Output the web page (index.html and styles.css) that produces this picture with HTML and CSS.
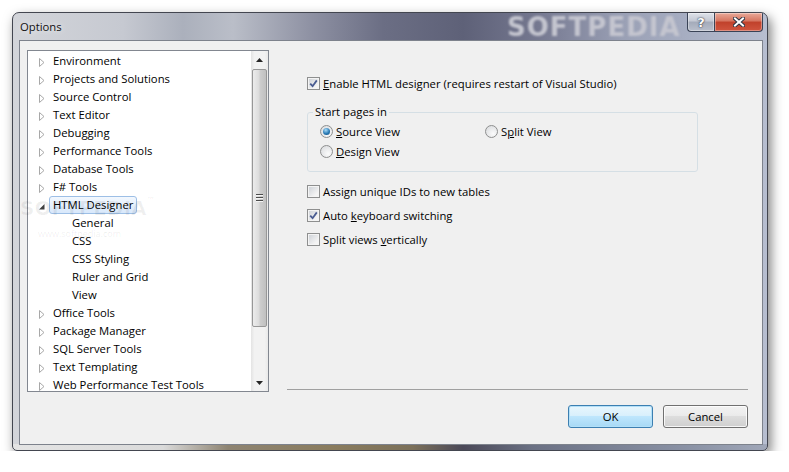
FILE: index.html
```html
<!DOCTYPE html>
<html lang="en">
<head>
    <meta charset="UTF-8">
    <title>Options</title>
    <link rel="stylesheet" href="styles.css">
</head>
<body>
    <div class="window">
        <div class="titlebar">
            <span class="title">Options</span>
            <span class="watermark">SOFTPEDIA</span>
            <div class="caption-buttons">
                <div class="cap help">?</div>
                <div class="cap close">
                    <svg width="12" height="10" viewBox="0 0 12 10">
                        <path d="M2 1.5 L10 8.5 M10 1.5 L2 8.5" stroke="#2f3645" stroke-width="4" stroke-linecap="square"/>
                        <path d="M2 1.5 L10 8.5 M10 1.5 L2 8.5" stroke="#fff" stroke-width="2" stroke-linecap="square"/>
                    </svg>
                </div>
            </div>
        </div>

        <div class="client">
            <span class="tree-mark">SOFTPEDIA<small>™</small></span>
            <span class="tree-url">www.softpedia.com</span>

            <div class="tree">
                <ul class="tree-items">
                    <li class="node"><svg class="twisty" width="6" height="9"><polygon points="0.5,0.5 5,4.5 0.5,8.5" fill="#fff" stroke="#a8a8a8"/></svg><span class="label">Environment</span></li>
                    <li class="node"><svg class="twisty" width="6" height="9"><polygon points="0.5,0.5 5,4.5 0.5,8.5" fill="#fff" stroke="#a8a8a8"/></svg><span class="label">Projects and Solutions</span></li>
                    <li class="node"><svg class="twisty" width="6" height="9"><polygon points="0.5,0.5 5,4.5 0.5,8.5" fill="#fff" stroke="#a8a8a8"/></svg><span class="label">Source Control</span></li>
                    <li class="node"><svg class="twisty" width="6" height="9"><polygon points="0.5,0.5 5,4.5 0.5,8.5" fill="#fff" stroke="#a8a8a8"/></svg><span class="label">Text Editor</span></li>
                    <li class="node"><svg class="twisty" width="6" height="9"><polygon points="0.5,0.5 5,4.5 0.5,8.5" fill="#fff" stroke="#a8a8a8"/></svg><span class="label">Debugging</span></li>
                    <li class="node"><svg class="twisty" width="6" height="9"><polygon points="0.5,0.5 5,4.5 0.5,8.5" fill="#fff" stroke="#a8a8a8"/></svg><span class="label">Performance Tools</span></li>
                    <li class="node"><svg class="twisty" width="6" height="9"><polygon points="0.5,0.5 5,4.5 0.5,8.5" fill="#fff" stroke="#a8a8a8"/></svg><span class="label">Database Tools</span></li>
                    <li class="node"><svg class="twisty" width="6" height="9"><polygon points="0.5,0.5 5,4.5 0.5,8.5" fill="#fff" stroke="#a8a8a8"/></svg><span class="label">F# Tools</span></li>
                    <li class="node open"><svg class="twisty" width="6" height="9"><polygon points="5.5,2 5.5,7.5 0,7.5" fill="#404040"/></svg><span class="label selected">HTML Designer</span></li>
                    <li class="node child"><span class="label">General</span></li>
                    <li class="node child"><span class="label">CSS</span></li>
                    <li class="node child"><span class="label">CSS Styling</span></li>
                    <li class="node child"><span class="label">Ruler and Grid</span></li>
                    <li class="node child"><span class="label">View</span></li>
                    <li class="node"><svg class="twisty" width="6" height="9"><polygon points="0.5,0.5 5,4.5 0.5,8.5" fill="#fff" stroke="#a8a8a8"/></svg><span class="label">Office Tools</span></li>
                    <li class="node"><svg class="twisty" width="6" height="9"><polygon points="0.5,0.5 5,4.5 0.5,8.5" fill="#fff" stroke="#a8a8a8"/></svg><span class="label">Package Manager</span></li>
                    <li class="node"><svg class="twisty" width="6" height="9"><polygon points="0.5,0.5 5,4.5 0.5,8.5" fill="#fff" stroke="#a8a8a8"/></svg><span class="label">SQL Server Tools</span></li>
                    <li class="node"><svg class="twisty" width="6" height="9"><polygon points="0.5,0.5 5,4.5 0.5,8.5" fill="#fff" stroke="#a8a8a8"/></svg><span class="label">Text Templating</span></li>
                    <li class="node"><svg class="twisty" width="6" height="9"><polygon points="0.5,0.5 5,4.5 0.5,8.5" fill="#fff" stroke="#a8a8a8"/></svg><span class="label">Web Performance Test Tools</span></li>
                </ul>
                <div class="vscroll">
                    <div class="sb-btn">
                        <svg width="7" height="4"><polygon points="3.5,0 7,4 0,4" fill="#262626"/></svg>
                    </div>
                    <div class="sb-track">
                        <div class="sb-thumb">
                            <div class="grip"><i></i><i></i><i></i></div>
                        </div>
                    </div>
                    <div class="sb-btn">
                        <svg width="7" height="4"><polygon points="0,0 7,0 3.5,4" fill="#262626"/></svg>
                    </div>
                </div>
            </div>

            <div class="pane">
                <div class="options">
                    <label class="check">
                        <span class="box"><svg width="9" height="9"><path d="M1.2 4.6 L3.6 7.2 L7.8 1.4" fill="none" stroke="#4b5d92" stroke-width="1.8"/></svg></span>
                        <span><u>E</u>nable HTML designer (requires restart of Visual Studio)</span>
                    </label>

                    <fieldset class="group">
                        <legend>Start pages in</legend>
                        <div class="radios">
                            <label class="radio"><span class="dot on"></span><span><u>S</u>ource View</span></label>
                            <label class="radio"><span class="dot"></span><span>S<u>p</u>lit View</span></label>
                            <label class="radio"><span class="dot"></span><span><u>D</u>esign View</span></label>
                        </div>
                    </fieldset>

                    <div class="checks">
                        <label class="check">
                            <span class="box"></span>
                            <span>Assi<u>g</u>n unique IDs to new tables</span>
                        </label>
                        <label class="check">
                            <span class="box"><svg width="9" height="9"><path d="M1.2 4.6 L3.6 7.2 L7.8 1.4" fill="none" stroke="#4b5d92" stroke-width="1.8"/></svg></span>
                            <span>Auto <u>k</u>eyboard switching</span>
                        </label>
                        <label class="check">
                            <span class="box"></span>
                            <span>Split views <u>v</u>ertically</span>
                        </label>
                    </div>
                </div>
                <div class="separator"></div>
                <div class="buttons">
                    <button class="btn default">OK</button>
                    <button class="btn">Cancel</button>
                </div>
            </div>
        </div>
    </div>
</body>
</html>
```

FILE: styles.css
```css
body {
    margin: 0;
    background-color: #fff;
    font-family: "Open Sans", "Noto Sans", sans-serif;
    font-size: 11.3px;
    color: #000;
}
.window {
    margin: 12px 0 0 12px;
    width: 754px;
    height: 437px;
    border: 1px solid #434650;
    border-radius: 7px 7px 5px 5px;
    display: flex;
    flex-direction: column;
    box-shadow: 3px 5px 12px rgba(0, 0, 0, 0.5);
    background:
        linear-gradient(to right, #e4e4e4 0px, #dadada 150px, #8e8472 215px, #8a7c5e 320px, #7b705a 400px, #4b4958 450px, #6b7184 520px, #8b93a6 680px, #a0a7b8 754px) bottom / 100% 6px no-repeat,
        linear-gradient(to right, #d3d5da 0px, #c6c9d1 110px, #abb0bc 170px, #babec8 220px, #8d90a2 300px, #6b6e84 370px, #5e6178 450px, #73768e 520px, #9aa0b5 610px, #a8afc3 680px, #b7bed0 754px);
    overflow: hidden;
}
.titlebar {
    position: relative;
    height: 27px;
    display: flex;
    align-items: flex-start;
}
.title {
    align-self: center;
    padding-left: 7px;
    color: #111;
    text-shadow: 0 0 6px rgba(255, 255, 255, 0.9);
}
.watermark {
    position: absolute;
    left: 494px;
    top: -1px;
    font-family: "DejaVu Sans", sans-serif;
    font-weight: bold;
    font-size: 26px;
    letter-spacing: 1px;
    color: #c4c5cf;
    filter: blur(1px);
}
.caption-buttons {
    margin-left: auto;
    margin-right: 4px;
    display: flex;
    position: relative;
}
.cap {
    height: 19px;
    box-sizing: border-box;
    border: 1px solid #3a4356;
    border-top: none;
    display: flex;
    align-items: center;
    justify-content: center;
    box-shadow: inset 0 0 0 1px rgba(255, 255, 255, 0.35);
}
.help {
    width: 27px;
    border-radius: 0 0 0 4px;
    border-right: none;
    background: linear-gradient(#dfe2e9, #c3c8d3 45%, #a4abba 50%, #b9bfcc);
    color: #fff;
    font-family: "DejaVu Sans", sans-serif;
    font-weight: bold;
    font-size: 13px;
    text-shadow: 0 0 2px #2a3040, 0 0 1px #2a3040;
}
.close {
    width: 49px;
    border-radius: 0 0 4px 0;
    background: linear-gradient(#e9a999, #d5745f 45%, #c0412b 50%, #d0553f);
}
.client {
    position: relative;
    flex: 1;
    margin: 0 4px 5px 6px;
    border: 1px solid #7d828c;
    background-color: #f0f0f0;
    display: flex;
    padding: 9px 14px 16px 7px;
}
.tree-mark {
    position: absolute;
    left: 0;
    top: 155px;
    font-family: "DejaVu Sans", sans-serif;
    font-weight: bold;
    font-size: 20px;
    color: rgba(0, 0, 0, 0.06);
    pointer-events: none;
}
.tree-mark small {
    font-size: 8px;
    vertical-align: top;
}
.tree-url {
    position: absolute;
    left: 18px;
    top: 186px;
    font-size: 9px;
    color: rgba(0, 0, 0, 0.08);
    pointer-events: none;
}
.tree {
    width: 242px;
    height: 342px;
    box-sizing: border-box;
    border: 1px solid #828790;
    background-color: #fff;
    display: flex;
    flex-shrink: 0;
}
.tree-items {
    flex: 1;
    margin: 0;
    padding: 1px 0 0 0;
    list-style: none;
    overflow: hidden;
}
.node {
    height: 18px;
    display: flex;
    align-items: center;
    padding-left: 11px;
    white-space: nowrap;
}
.twisty {
    width: 6px;
    margin-right: 4px;
    margin-top: 2px;
    flex-shrink: 0;
}
.node.child {
    padding-left: 40px;
}
.label {
    padding: 0 3px;
    border: 1px solid transparent;
    line-height: 16px;
}
.label.selected {
    border-color: #9dbfe6;
    border-radius: 3px;
    background: linear-gradient(#f3f8fe, #d8e8fb);
}
.vscroll {
    width: 17px;
    display: flex;
    flex-direction: column;
    background: linear-gradient(to right, #e3e3e3, #f2f2f2 20%, #f2f2f2 80%, #e9e9e9);
}
.sb-btn {
    height: 17px;
    display: flex;
    align-items: center;
    justify-content: center;
}
.sb-track {
    flex: 1;
    padding-top: 1px;
}
.sb-thumb {
    height: 258px;
    box-sizing: border-box;
    margin: 0 1px;
    border: 1px solid #979797;
    border-radius: 2px;
    background: linear-gradient(to right, #ececec, #dcdcdc 45%, #cdcdcd 55%, #c0c0c0);
    display: flex;
    align-items: center;
    justify-content: center;
}
.grip {
    display: flex;
    flex-direction: column;
    gap: 1px;
}
.grip i {
    display: block;
    width: 7px;
    height: 1px;
    background-color: #4c4c4c;
    border-bottom: 1px solid #f4f4f4;
}
.pane {
    flex: 1;
    margin-left: 18px;
    display: flex;
    flex-direction: column;
}
.options {
    flex: 1;
    padding: 24px 0 0 20px;
}
.check {
    height: 18px;
    display: flex;
    align-items: center;
}
.box {
    width: 13px;
    height: 13px;
    box-sizing: border-box;
    margin-right: 3px;
    border: 1px solid #8e8f8f;
    box-shadow: inset 0 0 0 1px #f4f4f4;
    background: linear-gradient(135deg, #cbcfd5, #f4f4f4 75%);
    display: flex;
    align-items: center;
    justify-content: center;
    flex-shrink: 0;
}
.group {
    margin: 11px 0 0 0;
    width: 391px;
    box-sizing: border-box;
    padding: 0 0 11px 0;
    border: 1px solid #d5dfe5;
    border-radius: 3px;
}
.group legend {
    margin-left: 5px;
    padding: 0 2px;
    line-height: 18px;
}
.radios {
    margin-top: 1px;
    padding-left: 12px;
    display: grid;
    grid-template-columns: 165px auto;
    row-gap: 2px;
}
.radio {
    height: 18px;
    display: flex;
    align-items: center;
}
.dot {
    width: 13px;
    height: 13px;
    box-sizing: border-box;
    margin-right: 3px;
    border: 1px solid #8e8f8f;
    border-radius: 50%;
    background: radial-gradient(circle at 65% 70%, #fbfbfb, #d6d8db);
    display: flex;
    align-items: center;
    justify-content: center;
}
.dot.on::after {
    content: "";
    width: 7px;
    height: 7px;
    border-radius: 50%;
    background: radial-gradient(circle at 40% 30%, #a9dcf8, #2b7bb6 55%, #0f4a78);
}
.checks {
    margin-top: 10px;
    display: flex;
    flex-direction: column;
    gap: 6px;
}
.separator {
    border-top: 1px solid #a0a0a0;
}
.buttons {
    margin-top: 15px;
    display: flex;
    justify-content: flex-end;
    gap: 10px;
}
.btn {
    width: 85px;
    height: 23px;
    border: 1px solid #707070;
    border-radius: 3px;
    font-family: inherit;
    font-size: inherit;
    color: #000;
    box-shadow: inset 0 0 0 1px rgba(255, 255, 255, 0.8);
    background: linear-gradient(#f2f2f2, #ebebeb 45%, #dddddd 50%, #cfcfcf);
}
.btn.default {
    border-color: #3c7fb1;
    box-shadow: inset 0 0 0 1px #b3e0f8;
    background: linear-gradient(#e8f6fd, #d9f0fc 45%, #bee6fd 50%, #a7d9f5);
}
```
